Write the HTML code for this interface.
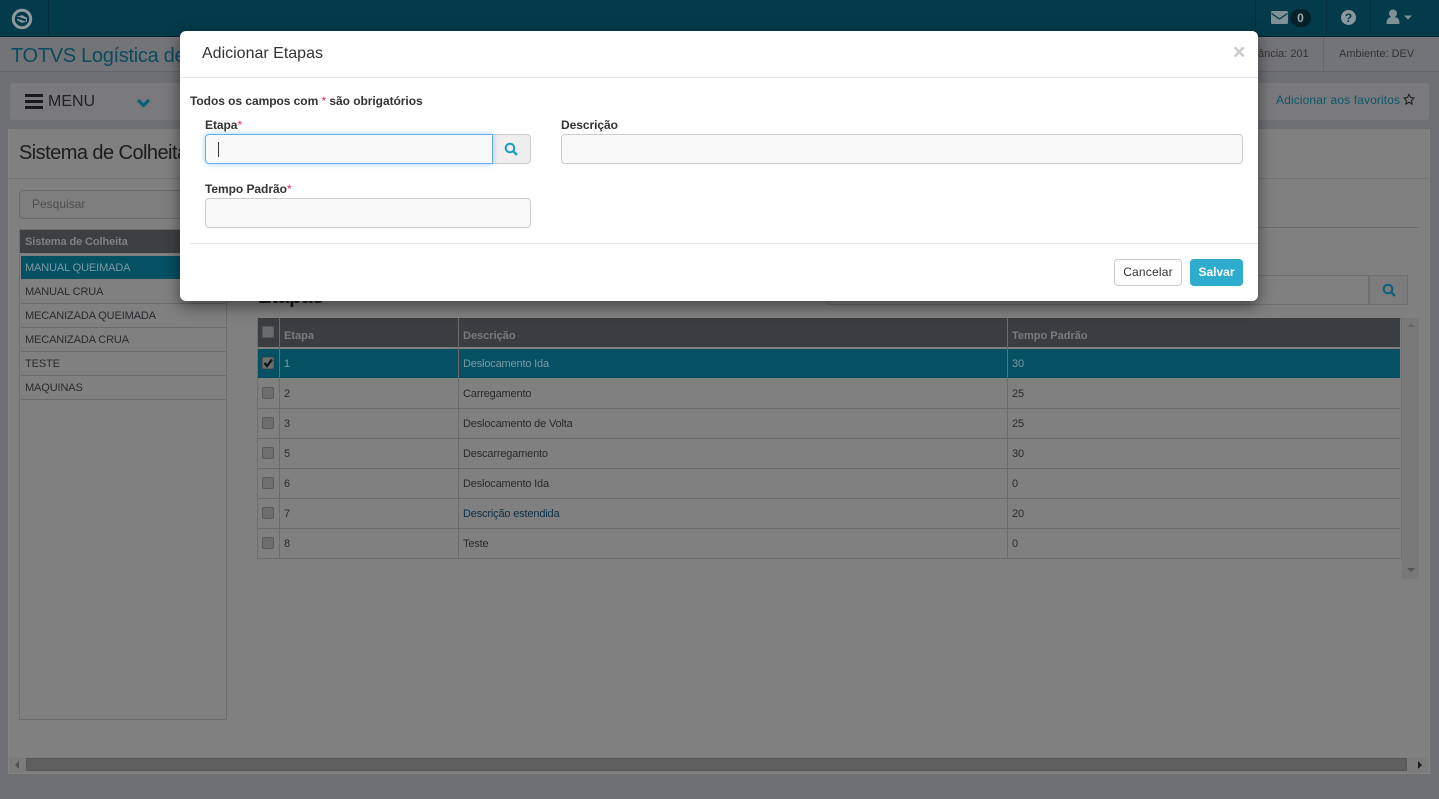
<!DOCTYPE html>
<html lang="pt"><head><meta charset="utf-8"><title>Adicionar Etapas</title>
<style>
*{box-sizing:border-box}
html,body{margin:0;padding:0;width:1439px;height:799px;overflow:hidden;background:#6f7074;font-family:"Liberation Sans",sans-serif;color:#222}
.a{position:absolute}
.t{position:absolute;white-space:nowrap;line-height:1}
.row{position:absolute;left:21px;width:205px;height:24px;border-bottom:1px solid #6b6b6b;font-size:11px;line-height:25px;padding-left:4px;color:#2a2a2e;letter-spacing:-.12px}
.tr{position:absolute;left:258px;width:1142px;height:30px;border-bottom:1px solid #6b6b6b;font-size:11px;color:#2a2a2a;letter-spacing:-.17px}
.tr span{position:absolute;top:9px;line-height:12px;white-space:nowrap}
.cb{position:absolute;left:262px;width:12px;height:12px;border:1px solid #5a5a5a;border-radius:2px;background:#6e6e6e}
.v{position:absolute;width:1px;background:#6b6b6b}
.lbl{position:absolute;font-size:12px;font-weight:bold;color:#333;line-height:14px;white-space:nowrap;letter-spacing:-.05px}
.lbl i{color:#e0245e;font-style:normal;font-weight:normal}
.inp{position:absolute;background:#f9f9f9;border:1px solid #ccc;border-radius:4px}
</style></head><body>

<!-- top bar -->
<div class="a" style="left:0;top:0;width:1439px;height:37px;background:#043b4a;border-bottom:1px solid #03262f"></div>
<div class="a" style="left:48px;top:0;width:1px;height:36px;background:#03303c"></div>
<svg class="a" style="left:11px;top:8px" width="22" height="22" viewBox="0 0 22 22"><circle cx="11" cy="11" r="8.700" fill="none" stroke="#8f9a9d" stroke-width="3"/><path d="M6 8.300 L11.500 7.300 L16 10 L16 13.700 L10.500 14.700 L6 12 Z" fill="#8f9a9d"/><path d="M6 9.600 L15 12.400" stroke="#043b4a" stroke-width="2.200"/></svg>
<div class="a" style="left:1255px;top:0;width:1px;height:34px;background:#03303c"></div>
<div class="a" style="left:1326px;top:0;width:1px;height:34px;background:#03303c"></div>
<div class="a" style="left:1370px;top:0;width:1px;height:34px;background:#03303c"></div>
<svg class="a" style="left:1271px;top:11px" width="17" height="13" viewBox="0 0 17 13"><rect width="17" height="13" rx="1.500" fill="#7f9097"/><path d="M0.500 2.500 L8.500 8 L16.500 2.500" fill="none" stroke="#043b4a" stroke-width="1.300"/></svg>
<div class="a" style="left:1290px;top:9px;width:21px;height:18px;border-radius:9px;background:#03212a;color:#a0a8aa;font-size:12px;font-weight:bold;text-align:center;line-height:18px">0</div>
<svg class="a" style="left:1341px;top:10px" width="15" height="15" viewBox="0 0 15 15"><circle cx="7.500" cy="7.500" r="7.500" fill="#8a979c"/><text x="7.500" y="12" font-family="Liberation Sans" font-size="12" font-weight="bold" text-anchor="middle" fill="#043b4a">?</text></svg>
<svg class="a" style="left:1386px;top:9px" width="28" height="16" viewBox="0 0 28 16"><circle cx="7" cy="4.500" r="4" fill="#7f9097"/><path d="M0.500 15 C0.500 9 3 8 7 8 C11 8 13.500 9 13.500 15 Z" fill="#7f9097"/><path d="M18 6.500 H26 L22 10.500 Z" fill="#7f9097"/></svg>

<!-- second bar -->
<div class="a" style="left:0;top:37px;width:1439px;height:35px;background:#737478;border-bottom:1px solid #66676a"></div>
<div class="t" style="left:11px;top:46px;font-size:20px;color:#0c4a5e;letter-spacing:-.3px">TOTVS Logística de</div>
<div class="t" style="left:1258px;top:49px;font-size:11px;color:#333">ância: 201</div>
<div class="a" style="left:1323px;top:37px;width:1px;height:34px;background:#66676a"></div>
<div class="t" style="left:1339px;top:49px;font-size:11px;color:#333">Ambiente: DEV</div>

<!-- menu bar -->
<div class="a" style="left:10px;top:83px;width:1419px;height:37px;background:#7a7a7c;border-radius:3px"></div>
<div class="a" style="left:25px;top:94px;width:18px;height:3px;background:#191919"></div>
<div class="a" style="left:25px;top:100px;width:18px;height:3px;background:#191919"></div>
<div class="a" style="left:25px;top:106px;width:18px;height:3px;background:#191919"></div>
<div class="t" style="left:48px;top:94px;font-size:16px;color:#222">MENU</div>
<svg class="a" style="left:136px;top:98px" width="15" height="11" viewBox="0 0 15 11"><path d="M2 2 L7.500 7.500 L13 2" fill="none" stroke="#0a5f78" stroke-width="3.200"/></svg>
<div class="t" style="left:1276px;top:94px;font-size:12px;color:#0c566b;letter-spacing:.12px">Adicionar aos favoritos</div>
<svg class="a" style="left:1403px;top:93px" width="12" height="12" viewBox="0 0 24 24"><path d="M12 2.500 L15 9 L22 10 L17 15 L18.200 22 L12 18.600 L5.800 22 L7 15 L2 10 L9 9 Z" fill="none" stroke="#222" stroke-width="2.200"/></svg>

<!-- panel -->
<div class="a" style="left:8px;top:129px;width:1422px;height:645px;background:#808080;border:1px solid #858585;border-top:0"></div>
<div class="a" style="left:9px;top:178px;width:1420px;height:1px;background:#737373"></div>
<div class="t" style="left:19px;top:143px;font-size:20px;color:#1c1c1c;letter-spacing:-.55px">Sistema de Colheita</div>
<div class="a" style="left:1100px;top:227px;width:319px;height:1px;background:#6b6b6b"></div>

<!-- left list -->
<div class="a" style="left:19px;top:190px;width:300px;height:29px;border:1px solid #6a6a6a;border-radius:4px;background:#7e7e7e"></div>
<div class="t" style="left:32px;top:198px;font-size:12px;color:#4d4d4d">Pesquisar</div>
<div class="a" style="left:19px;top:229px;width:208px;height:491px;border:1px solid #6d6d6d"></div>
<div class="a" style="left:20px;top:230px;width:206px;height:23px;background:#3d4043;color:#7f8081;font-size:11px;font-weight:bold;line-height:24px;padding-left:5px;letter-spacing:-.1px">Sistema de Colheita</div>
<div class="row" style="top:256px;background:#055062;color:#7c9aa3;border:0;height:23px">MANUAL QUEIMADA</div>
<div class="row" style="top:280px">MANUAL CRUA</div>
<div class="row" style="top:304px">MECANIZADA QUEIMADA</div>
<div class="row" style="top:328px">MECANIZADA CRUA</div>
<div class="row" style="top:352px">TESTE</div>
<div class="row" style="top:376px">MAQUINAS</div>

<!-- right search + heading -->
<div class="t" style="left:258px;top:287px;font-size:20px;font-weight:bold;color:#1c1c1c">Etapas</div>
<div class="a" style="left:1369px;top:275px;width:39px;height:30px;border:1px solid #6f6f6f;background:#7d7d7d"></div>
<div class="a" style="left:828px;top:275px;width:541px;height:30px;border:1px solid #6f6f6f"></div>
<svg class="a" style="left:1382px;top:283px" width="14" height="14" viewBox="0 0 14 14"><circle cx="6" cy="6" r="4.300" fill="none" stroke="#0a5f78" stroke-width="2"/><path d="M9.200 9.200 L13 13" stroke="#0a5f78" stroke-width="2.400"/></svg>

<!-- table -->
<div class="a" style="left:257px;top:318px;width:1145px;height:241px;border:1px solid #6f6f6f"></div>
<div class="a" style="left:258px;top:318px;width:1142px;height:29px;background:#3b3e41"></div>
<div class="t" style="left:284px;top:331px;font-size:11px;font-weight:bold;color:#7a7b7d">Etapa</div>
<div class="t" style="left:463px;top:331px;font-size:11px;font-weight:bold;color:#7a7b7d">Descrição</div>
<div class="t" style="left:1012px;top:331px;font-size:11px;font-weight:bold;color:#7a7b7d">Tempo Padrão</div>
<div class="tr" style="top:349px;height:29px;background:#055062;color:#7c9aa3;border:0"><span style="left:26px">1</span><span style="left:205px">Deslocamento Ida</span><span style="left:754px">30</span></div>
<div class="tr" style="top:379px"><span style="left:26px">2</span><span style="left:205px">Carregamento</span><span style="left:754px">25</span></div>
<div class="tr" style="top:409px"><span style="left:26px">3</span><span style="left:205px">Deslocamento de Volta</span><span style="left:754px">25</span></div>
<div class="tr" style="top:439px"><span style="left:26px">5</span><span style="left:205px">Descarregamento</span><span style="left:754px">30</span></div>
<div class="tr" style="top:469px"><span style="left:26px">6</span><span style="left:205px">Deslocamento Ida</span><span style="left:754px">0</span></div>
<div class="tr" style="top:499px"><span style="left:26px">7</span><span style="left:205px;color:#0c2f48">Descrição estendida</span><span style="left:754px">20</span></div>
<div class="tr" style="top:529px;border:0"><span style="left:26px">8</span><span style="left:205px">Teste</span><span style="left:754px">0</span></div>
<div class="v" style="left:279px;top:318px;height:240px"></div>
<div class="v" style="left:458px;top:318px;height:240px"></div>
<div class="v" style="left:1007px;top:318px;height:240px"></div>
<div class="cb" style="top:326px;background:#6b6c6e;border-color:#5a5a5a"></div>
<div class="cb" style="top:357px"></div>
<svg class="a" style="left:262px;top:357px" width="12" height="12" viewBox="0 0 12 12"><path d="M2.500 6 L5 9 L10 2.500" fill="none" stroke="#111" stroke-width="2.200"/></svg>
<div class="cb" style="top:387px"></div>
<div class="cb" style="top:417px"></div>
<div class="cb" style="top:447px"></div>
<div class="cb" style="top:477px"></div>
<div class="cb" style="top:507px"></div>
<div class="cb" style="top:537px"></div>
<div class="a" style="left:1402px;top:318px;width:17px;height:261px;background:#797979"></div>
<div class="a" style="left:1407px;top:323px;border:4px solid transparent;border-top:0;border-bottom:4px solid #666"></div>
<div class="a" style="left:1407px;top:568px;border:4px solid transparent;border-bottom:0;border-top:4px solid #555"></div>

<!-- horizontal scrollbar -->
<div class="a" style="left:9px;top:757px;width:1420px;height:16px;background:#7c7c7c"></div>
<div class="a" style="left:26px;top:758px;width:1381px;height:13px;background:#5f5f5f;border:1px solid #565656"></div>
<div class="a" style="left:15px;top:761px;border:4px solid transparent;border-left:0;border-right:4px solid #4f4f4f"></div>
<div class="a" style="left:1418px;top:761px;border:4px solid transparent;border-right:0;border-left:4px solid #1c1c1c"></div>

<!-- modal -->
<div class="a" style="left:180px;top:31px;width:1078px;height:270px;background:#fff;border-radius:6px;box-shadow:0 5px 15px rgba(0,0,0,.5)"></div>
<div class="t" style="left:202px;top:46px;font-size:16px;color:#333">Adicionar Etapas</div>
<div class="t" style="left:1233px;top:42px;font-size:21px;font-weight:bold;color:#c9c9c9">×</div>
<div class="a" style="left:180px;top:77px;width:1078px;height:1px;background:#e5e5e5"></div>
<div class="lbl" style="left:190px;top:94px">Todos os campos com <i>*</i> são obrigatórios</div>

<div class="lbl" style="left:205px;top:118px">Etapa<i>*</i></div>
<div class="inp" style="left:490px;top:134px;width:41px;height:30px;background:#eee;border-radius:0 4px 4px 0"></div>
<div class="inp" style="left:205px;top:134px;width:288px;height:30px;border-color:#66afe9;border-radius:4px 0 0 4px;box-shadow:0 0 6px rgba(102,175,233,.6)"></div>
<div class="a" style="left:218px;top:142px;width:1px;height:15px;background:#333"></div>
<svg class="a" style="left:504px;top:142px" width="14" height="14" viewBox="0 0 14 14"><circle cx="6" cy="6" r="4.300" fill="none" stroke="#1b9dbf" stroke-width="2"/><path d="M9.200 9.200 L13 13" stroke="#1b9dbf" stroke-width="2.400"/></svg>

<div class="lbl" style="left:561px;top:118px">Descrição</div>
<div class="inp" style="left:561px;top:134px;width:682px;height:30px"></div>

<div class="lbl" style="left:205px;top:182px">Tempo Padrão<i>*</i></div>
<div class="inp" style="left:205px;top:198px;width:326px;height:30px"></div>

<div class="a" style="left:190px;top:243px;width:1068px;height:1px;background:#e5e5e5"></div>
<div class="a" style="left:1114px;top:259px;width:68px;height:27px;border:1px solid #ccc;border-radius:4px;background:#fff;font-size:12px;color:#333;text-align:center;line-height:24px;letter-spacing:.2px">Cancelar</div>
<div class="a" style="left:1190px;top:259px;width:53px;height:27px;border-radius:4px;background:#2eacce;font-size:12px;font-weight:bold;color:#fff;text-align:center;line-height:26px">Salvar</div>
</body></html>
